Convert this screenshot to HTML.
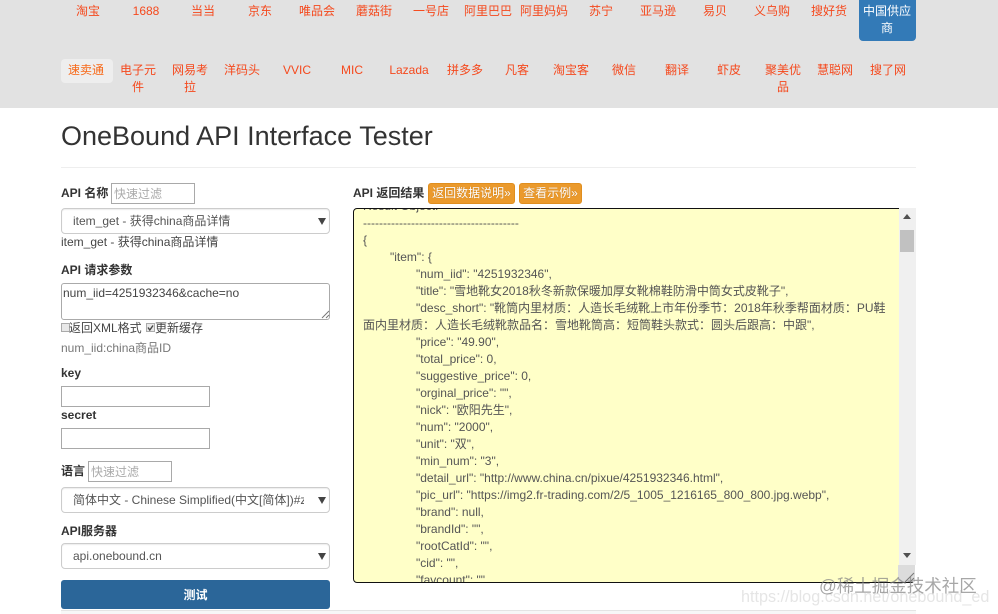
<!DOCTYPE html>
<html lang="zh">
<head>
<meta charset="utf-8">
<title>OneBound API Interface Tester</title>
<style>
html,body{margin:0;padding:0;background:#fff}
body{width:998px;height:614px;position:relative;overflow:hidden;font-family:"Liberation Sans","Noto Sans CJK SC",sans-serif;font-size:12px;color:#333}
.a{position:absolute}
#nav{position:absolute;left:0;top:0;width:998px;height:108px;background:#e2e2e2}
.n{position:absolute;transform:translateX(-50%);color:#f5491d;font-size:12px;line-height:17px;text-align:center;white-space:nowrap}
.b{font-weight:bold;font-size:12px;line-height:17px;color:#333;white-space:nowrap}
.sel{position:absolute;left:61px;width:267px;border:1px solid #ccc;border-radius:4px;background:#fff;box-shadow:inset 0 1px 1px rgba(0,0,0,.075);overflow:hidden;color:#555;line-height:23px;white-space:nowrap}
.sel span{position:absolute;left:11px;top:1px}
.sel i{position:absolute;left:256px;top:9px;width:0;height:0;border-left:4px solid transparent;border-right:4px solid transparent;border-top:7px solid #444}
.inp{position:absolute;border:1px solid #a9a9a9;background:#fff;box-sizing:border-box}
.ph{color:#aaa;line-height:21px;padding-left:2px;font-size:12px;white-space:nowrap}
.ob{position:absolute;top:183px;height:21px;background:#eb9a2c;border:1px solid #e08e1e;border-radius:3px;box-sizing:border-box;color:#fff;line-height:19px;font-size:12px;text-align:center;white-space:nowrap;text-shadow:0 0 1px #b56d10}
#res{position:absolute;left:353px;top:208px;width:562px;height:375px;box-sizing:border-box;border:1px solid #111;border-radius:4px;background:#ffffc8;overflow:hidden;font-family:"Liberation Sans","Noto Sans CJK TC",sans-serif}
.l{position:absolute;font-size:12px;line-height:17px;color:#555;white-space:nowrap}
#sb{position:absolute;left:899px;top:208px;width:17px;height:357px;background:#f0f0f0}
.cb{position:absolute;width:7px;height:7px;border:1px solid #aaa;background:#e8e8e8;box-sizing:content-box}
</style>
</head>
<body>
<div id="nav"></div>
<div class="n" style="left:88px;top:3px">淘宝</div>
<div class="n" style="left:146px;top:3px">1688</div>
<div class="n" style="left:203px;top:3px">当当</div>
<div class="n" style="left:260px;top:3px">京东</div>
<div class="n" style="left:317px;top:3px">唯品会</div>
<div class="n" style="left:374px;top:3px">蘑菇街</div>
<div class="n" style="left:431px;top:3px">一号店</div>
<div class="n" style="left:488px;top:3px">阿里巴巴</div>
<div class="n" style="left:544px;top:3px">阿里妈妈</div>
<div class="n" style="left:601px;top:3px">苏宁</div>
<div class="n" style="left:658px;top:3px">亚马逊</div>
<div class="n" style="left:715px;top:3px">易贝</div>
<div class="n" style="left:772px;top:3px">义乌购</div>
<div class="n" style="left:829px;top:3px">搜好货</div>
<div class="a" style="left:859px;top:-4px;width:57px;height:45px;background:#337ab7;border-radius:4px"></div>
<div class="n" style="left:887px;top:3px;color:#fff">中国供应<br>商</div>

<div class="a" style="left:61px;top:59px;width:52px;height:24px;background:#eeeeee;border-radius:4px"></div>
<div class="n" style="left:86px;top:62px;color:#f76a1a">速卖通</div>
<div class="n" style="left:138px;top:62px">电子元<br>件</div>
<div class="n" style="left:190px;top:62px">网易考<br>拉</div>
<div class="n" style="left:242px;top:62px">洋码头</div>
<div class="n" style="left:297px;top:62px">VVIC</div>
<div class="n" style="left:352px;top:62px">MIC</div>
<div class="n" style="left:409px;top:62px">Lazada</div>
<div class="n" style="left:465px;top:62px">拼多多</div>
<div class="n" style="left:517px;top:62px">凡客</div>
<div class="n" style="left:571px;top:62px">淘宝客</div>
<div class="n" style="left:624px;top:62px">微信</div>
<div class="n" style="left:677px;top:62px">翻译</div>
<div class="n" style="left:729px;top:62px">虾皮</div>
<div class="n" style="left:783px;top:62px">聚美优<br>品</div>
<div class="n" style="left:835px;top:62px">慧聪网</div>
<div class="n" style="left:888px;top:62px">搜了网</div>

<div class="a" style="left:61px;top:120px;font-size:27px;line-height:32px;color:#333;white-space:nowrap">OneBound API Interface Tester</div>
<div class="a" style="left:61px;top:167px;width:855px;height:1px;background:#eee"></div>

<div class="a b" style="left:61px;top:185px">API 名称</div>
<div class="inp ph" style="left:111px;top:183px;width:84px;height:21px">快速过滤</div>
<div class="sel" style="top:208px;height:24px"><span>item_get - 获得china商品详情</span><i></i></div>
<div class="a" style="left:61px;top:234px;line-height:17px;color:#444;white-space:nowrap">item_get - 获得china商品详情</div>

<div class="a b" style="left:61px;top:262px">API 请求参数</div>
<div class="a" style="left:61px;top:283px;width:269px;height:37px;box-sizing:border-box;border:1px solid #aaa;border-radius:3px;background:#fff;padding:1px 0 0 1px;line-height:17px;color:#444">num_iid=4251932346&amp;cache=no</div>
<svg class="a" style="left:321px;top:309px" width="9" height="10" viewBox="0 0 9 10"><path d="M1 9L8 2M5 9L8 6" stroke="#777" stroke-width="1" fill="none"/></svg>
<div class="cb" style="left:61px;top:323px"></div>
<div class="a" style="left:69px;top:320px;line-height:17px;color:#444;white-space:nowrap">返回XML格式</div>
<div class="cb" style="left:146px;top:323px"></div>
<svg class="a" style="left:146px;top:323px" width="9" height="9" viewBox="0 0 9 9"><path d="M2 4.5L3.8 7L7 2.5" stroke="#444" stroke-width="1.4" fill="none"/></svg>
<div class="a" style="left:155px;top:320px;line-height:17px;color:#444;white-space:nowrap">更新缓存</div>
<div class="a" style="left:61px;top:340px;line-height:17px;color:#777;white-space:nowrap">num_iid:china商品ID</div>

<div class="a b" style="left:61px;top:365px">key</div>
<div class="inp" style="left:61px;top:386px;width:149px;height:21px"></div>
<div class="a b" style="left:61px;top:407px">secret</div>
<div class="inp" style="left:61px;top:428px;width:149px;height:21px"></div>

<div class="a b" style="left:61px;top:463px">语言</div>
<div class="inp ph" style="left:88px;top:461px;width:84px;height:21px">快速过滤</div>
<div class="sel" style="top:487px;height:24px"><span style="width:231px;overflow:hidden;display:block;height:24px">简体中文 - Chinese Simplified(中文[简体])#zh-CN</span><i></i></div>
<div class="a b" style="left:61px;top:523px">API服务器</div>
<div class="sel" style="top:543px;height:24px"><span>api.onebound.cn</span><i></i></div>

<div class="a" style="left:61px;top:580px;width:269px;height:29px;background:#2b6699;border-radius:3px;color:#fff;font-weight:bold;text-align:center;line-height:31px">测试</div>
<div class="a" style="left:61px;top:610px;width:855px;height:4px;background:#f7f7f7;border-top:1px solid #e4e4e4;box-sizing:border-box"></div>

<div class="a b" style="left:353px;top:185px">API 返回结果</div>
<div class="ob" style="left:428px;width:87px">返回数据说明»</div>
<div class="ob" style="left:519px;width:63px">查看示例»</div>

<div id="res">
<div class="l" style="left:9px;top:-11px">Result Object:</div>
<div class="l" style="left:9px;top:6px">---------------------------------------</div>
<div class="l" style="left:9px;top:23px">{</div>
<div class="l" style="left:36px;top:40px">"item": {</div>
<div class="l" style="left:62px;top:57px">"num_iid": "4251932346",</div>
<div class="l" style="left:62px;top:74px">"title": "雪地靴女2018秋冬新款保暖加厚女靴棉鞋防滑中筒女式皮靴子",</div>
<div class="l" style="left:62px;top:91px">"desc_short": "靴筒内里材质：人造长毛绒靴上市年份季节：2018年秋季帮面材质：PU鞋</div>
<div class="l" style="left:9px;top:108px">面内里材质：人造长毛绒靴款品名：雪地靴筒高：短筒鞋头款式：圆头后跟高：中跟",</div>
<div class="l" style="left:62px;top:125px">"price": "49.90",</div>
<div class="l" style="left:62px;top:142px">"total_price": 0,</div>
<div class="l" style="left:62px;top:159px">"suggestive_price": 0,</div>
<div class="l" style="left:62px;top:176px">"orginal_price": "",</div>
<div class="l" style="left:62px;top:193px">"nick": "欧阳先生",</div>
<div class="l" style="left:62px;top:210px">"num": "2000",</div>
<div class="l" style="left:62px;top:227px">"unit": "双",</div>
<div class="l" style="left:62px;top:244px">"min_num": "3",</div>
<div class="l" style="left:62px;top:261px">"detail_url": "http://www.china.cn/pixue/4251932346.html",</div>
<div class="l" style="left:62px;top:278px">"pic_url": "https://img2.fr-trading.com/2/5_1005_1216165_800_800.jpg.webp",</div>
<div class="l" style="left:62px;top:295px">"brand": null,</div>
<div class="l" style="left:62px;top:312px">"brandId": "",</div>
<div class="l" style="left:62px;top:329px">"rootCatId": "",</div>
<div class="l" style="left:62px;top:346px">"cid": "",</div>
<div class="l" style="left:62px;top:363px">"favcount": ""</div>
</div>
<div id="sb">
  <div class="a" style="left:4px;top:6px;width:0;height:0;border-left:4px solid transparent;border-right:4px solid transparent;border-bottom:5px solid #505050"></div>
  <div class="a" style="left:1px;top:22px;width:14px;height:22px;background:#c1c1c1"></div>
  <div class="a" style="left:4px;top:345px;width:0;height:0;border-left:4px solid transparent;border-right:4px solid transparent;border-top:5px solid #505050"></div>
</div>
<div class="a" style="left:898px;top:565px;width:17px;height:17px;background:#dcdcdc"></div>
<svg class="a" style="left:904px;top:572px" width="11" height="11" viewBox="0 0 11 11"><path d="M1 10L10 1M6 10L10 6" stroke="#777" stroke-width="1" fill="none"/></svg>

<div class="a" style="left:741px;top:586px;font-size:16.2px;line-height:22px;color:rgba(170,170,170,.3);white-space:nowrap">https://blog.csdn.net/onebound_ed</div>
<div class="a" style="left:819px;top:574px;font-size:17.5px;line-height:24px;color:rgba(130,130,130,.7);white-space:nowrap">@稀土掘金技术社区</div>
</body>
</html>
